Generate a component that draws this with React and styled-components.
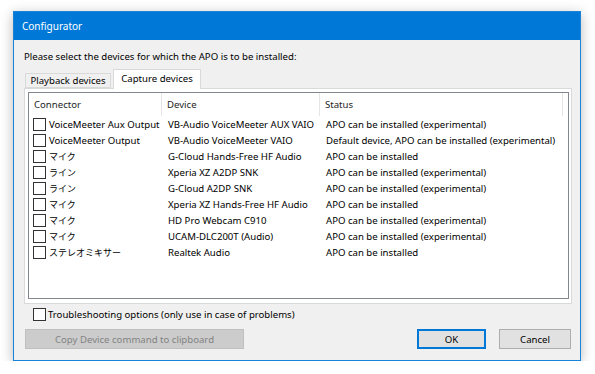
import React from 'react'
import styled, { createGlobalStyle } from 'styled-components'

const GlobalStyle = createGlobalStyle`
  * { box-sizing: border-box; }
  body {
    margin: 0;
    background: #ffffff;
    font-family: "Noto Sans", "Noto Sans CJK JP", sans-serif;
    font-size: 9.6px;
    color: #000;
  }
`

const Window = styled.div`
  margin: 11px 0 0 13px;
  width: 568px;
  height: 350px;
  border: 1px solid #1883d7;
  background: #f0f0f0;
  box-shadow: 0 3px 12px rgba(0, 0, 0, 0.28);
  display: flex;
  flex-direction: column;
`

const TitleBar = styled.div`
  height: 28px;
  background: #0078d7;
  color: #fff;
  font-size: 10px;
  padding-left: 8px;
  display: flex;
  align-items: center;
`

const Body = styled.div`
  flex: 1;
  padding: 9px 8px 0 10px;
  display: flex;
  flex-direction: column;
`

const Label = styled.div`
  height: 16px;
  line-height: 16px;
`

const TabStrip = styled.div`
  margin-top: 4px;
  height: 19px;
  padding-left: 1px;
  display: flex;
  align-items: flex-end;
  position: relative;
  z-index: 1;
`

const Tab = styled.div`
  width: ${({ $w }) => $w}px;
  height: ${({ $active }) => ($active ? 20 : 15)}px;
  margin-left: ${({ $active }) => ($active ? 2 : 0)}px;
  margin-bottom: ${({ $active }) => ($active ? -1 : 0)}px;
  border: 1px solid #d9d9d9;
  border-bottom: ${({ $active }) => ($active ? 'none' : '1px solid #d9d9d9')};
  background: ${({ $active }) => ($active ? '#fff' : '#f0f0f0')};
  display: flex;
  align-items: center;
  justify-content: center;
  padding-bottom: ${({ $active }) => ($active ? 2 : 0)}px;
`

const Pane = styled.div`
  height: 216px;
  border: 1px solid #d9d9d9;
  background: #fff;
  padding: 3px 2px 4px 3px;
  display: flex;
`

const ListBox = styled.div`
  flex: 1;
  border: 1px solid #828790;
  background: #fff;
  display: grid;
  grid-template-columns: 133px 158px 243px 1fr;
  grid-template-rows: 23px;
  grid-auto-rows: 16px;
  align-content: start;
`

const HeaderCell = styled.div`
  padding-left: ${({ $pad }) => $pad || 0}px;
  display: flex;
  align-items: center;
  color: #1e1e1e;
  border-right: ${({ $last }) => ($last ? 'none' : '1px solid #e5e5e5')};
`

const Cell = styled.div`
  padding-left: ${({ $pad }) => $pad || 0}px;
  display: flex;
  align-items: center;
  white-space: nowrap;
`

const CheckBox = styled.span`
  width: 13px;
  height: 13px;
  border: 1px solid #333333;
  background: #fff;
  flex: none;
  margin-right: ${({ $gap }) => $gap}px;
`

const Jp = styled.span`
  font-family: "Noto Sans CJK JP", sans-serif;
  font-size: 9px;
`

const OptionRow = styled.div`
  margin-top: 2px;
  height: 16px;
  padding-left: 9px;
  display: flex;
  align-items: center;
`

const ButtonRow = styled.div`
  margin-top: 7px;
  display: flex;
  align-items: center;
  padding-left: 1px;
`

const Button = styled.div`
  height: 20px;
  width: ${({ $w }) => $w}px;
  background: ${({ $disabled }) => ($disabled ? '#cccccc' : '#e1e1e1')};
  color: ${({ $disabled }) => ($disabled ? '#838383' : '#000')};
  border: 1px solid ${({ $disabled, $primary }) => ($primary ? '#0078d7' : $disabled ? '#bfbfbf' : '#adadad')};
  box-shadow: ${({ $primary }) => ($primary ? 'inset 0 0 0 1px #0078d7' : 'none')};
  display: flex;
  align-items: center;
  justify-content: center;
  margin-left: ${({ $ml }) => $ml || 0}px;
`

const devices = [
  { connector: 'VoiceMeeter Aux Output', device: 'VB-Audio VoiceMeeter AUX VAIO', status: 'APO can be installed (experimental)' },
  { connector: 'VoiceMeeter Output', device: 'VB-Audio VoiceMeeter VAIO', status: 'Default device, APO can be installed (experimental)' },
  { connector: 'マイク', jp: true, device: 'G-Cloud Hands-Free HF Audio', status: 'APO can be installed' },
  { connector: 'ライン', jp: true, device: 'Xperia XZ A2DP SNK', status: 'APO can be installed (experimental)' },
  { connector: 'ライン', jp: true, device: 'G-Cloud A2DP SNK', status: 'APO can be installed (experimental)' },
  { connector: 'マイク', jp: true, device: 'Xperia XZ Hands-Free HF Audio', status: 'APO can be installed' },
  { connector: 'マイク', jp: true, device: 'HD Pro Webcam C910', status: 'APO can be installed (experimental)' },
  { connector: 'マイク', jp: true, device: 'UCAM-DLC200T (Audio)', status: 'APO can be installed (experimental)' },
  { connector: 'ステレオミキサー', jp: true, device: 'Realtek Audio', status: 'APO can be installed' },
]

export default function App() {
  return (
    <>
      <GlobalStyle />
      <Window>
        <TitleBar>Configurator</TitleBar>
        <Body>
          <Label>Please select the devices for which the APO is to be installed:</Label>
          <TabStrip>
            <Tab $w={86}>Playback devices</Tab>
            <Tab $w={88} $active>Capture devices</Tab>
          </TabStrip>
          <Pane>
            <ListBox>
              <HeaderCell $pad={5}>Connector</HeaderCell>
              <HeaderCell $pad={5}>Device</HeaderCell>
              <HeaderCell $pad={5}>Status</HeaderCell>
              <HeaderCell $last />
              {devices.map((d, i) => (
                <React.Fragment key={i}>
                  <Cell $pad={4}>
                    <CheckBox $gap={3} />
                    {d.jp ? <Jp>{d.connector}</Jp> : d.connector}
                  </Cell>
                  <Cell $pad={6}>{d.device}</Cell>
                  <Cell $pad={6}>{d.status}</Cell>
                  <Cell />
                </React.Fragment>
              ))}
            </ListBox>
          </Pane>
          <OptionRow>
            <CheckBox $gap={2} />
            Troubleshooting options (only use in case of problems)
          </OptionRow>
          <ButtonRow>
            <Button $w={219} $disabled>Copy Device command to clipboard</Button>
            <Button $w={69} $primary $ml={173}>OK</Button>
            <Button $w={72} $ml={13}>Cancel</Button>
          </ButtonRow>
        </Body>
      </Window>
    </>
  )
}
